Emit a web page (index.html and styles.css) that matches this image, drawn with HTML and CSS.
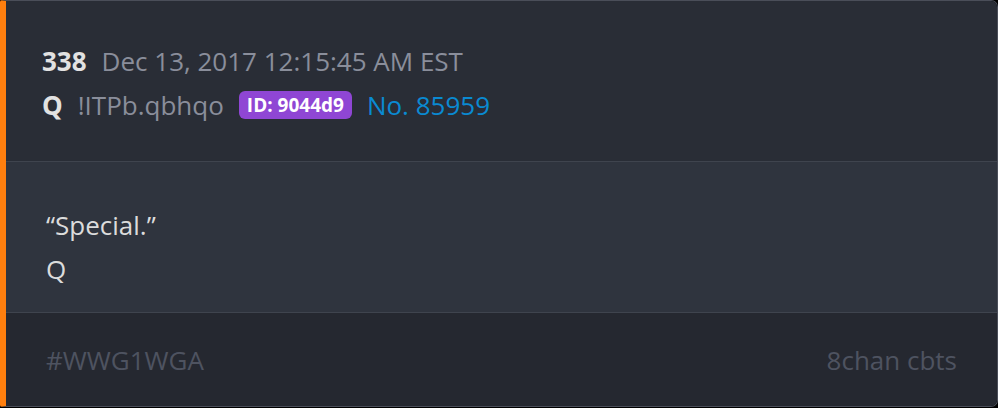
FILE: index.html
```html
<!DOCTYPE html>
<html>
  <head>
    <meta charset="utf-8">
    <link rel="stylesheet" href="styles.css">
  </head>
  <body>
    <div class="post">
      <div class="post-head">
        <div class="row">
          <span class="num">338</span>
          <span class="date">Dec 13, 2017 12:15:45 AM EST</span>
        </div>
        <div class="row">
          <span class="name">Q</span>
          <span class="trip">!ITPb.qbhqo</span>
          <span class="uid">ID: 9044d9</span>
          <span class="no">No. 85959</span>
        </div>
      </div>
      <div class="post-body">
        <div>&ldquo;Special.&rdquo;</div>
        <div>Q</div>
      </div>
      <div class="post-foot">
        <span>#WWG1WGA</span>
        <span>8chan cbts</span>
      </div>
    </div>
  </body>
</html>
```

FILE: styles.css
```css
body {
  margin: 0;
  background: #000;
  font-family: "Open Sans", "Liberation Sans", sans-serif;
  font-size: 26px;
}

.post {
  box-sizing: border-box;
  width: 998px;
  height: 407px;
  border: 1px solid #4a4e59;
  border-left: 6px solid #ff7f0e;
  border-radius: 2px 7px 7px 2px;
  overflow: hidden;
  display: flex;
  flex-direction: column;
}

.post-head {
  background: #292d36;
  padding: 38px 36px 34px;
  line-height: 44px;
  border-bottom: 1px solid #3f444e;
}

.row {
  display: flex;
  align-items: center;
  gap: 15px;
}

.num, .name {
  color: #e2e2e2;
  font-weight: bold;
}

.date, .trip {
  color: #8a8e9b;
}

.uid {
  background: #8f46d4;
  color: #fff;
  font-weight: bold;
  font-size: 19px;
  line-height: 28px;
  padding: 0 8px;
  border-radius: 6px;
}

.no {
  color: #0a8ad2;
}

.post-body {
  background: #2f343e;
  color: #dcdcdc;
  padding: 41px 40px 21px;
  line-height: 44px;
  border-bottom: 1px solid #3f444e;
}

.post-foot {
  flex: 1;
  background: #252830;
  color: #4e5360;
  padding: 0 40px;
  display: flex;
  justify-content: space-between;
  align-items: center;
}
```
